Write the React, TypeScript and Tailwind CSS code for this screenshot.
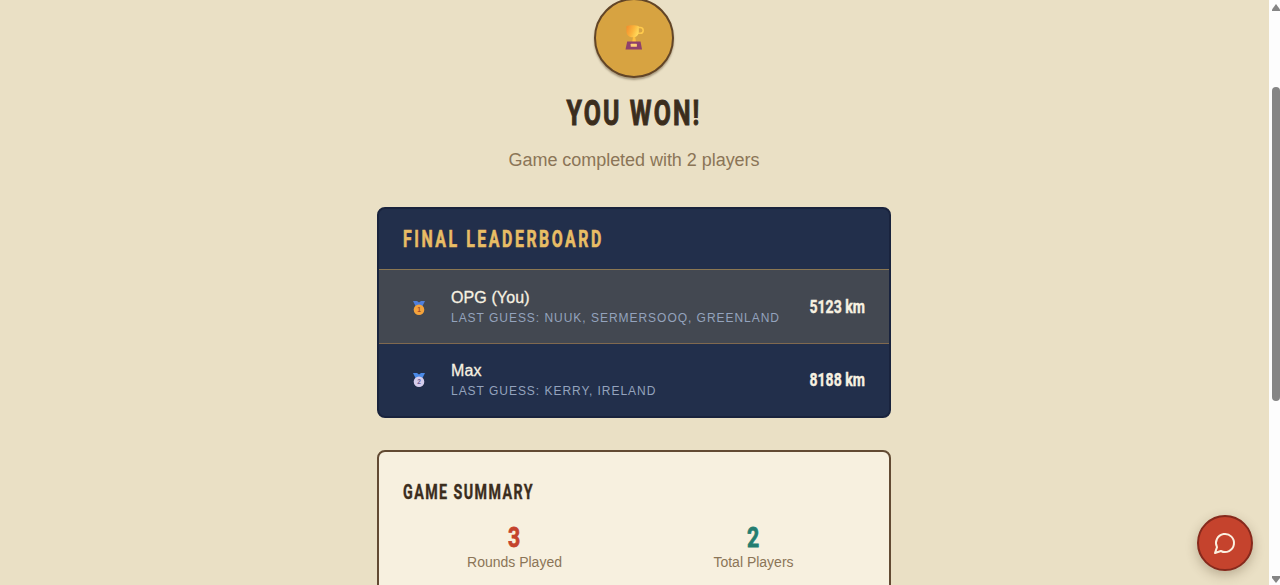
import React from "react";

interface Player {
  name: string;
  guess: string;
  distance: string;
  rank: number;
  ribbon: string;
  medal: string;
  digit: string;
}

const players: Player[] = [
  {
    name: "OPG (You)",
    guess: "Last guess: Nuuk, Sermersooq, Greenland",
    distance: "5123 km",
    rank: 1,
    ribbon: "#4f7fdc",
    medal: "#f5a33b",
    digit: "#a3492c",
  },
  {
    name: "Max",
    guess: "Last guess: Kerry, Ireland",
    distance: "8188 km",
    rank: 2,
    ribbon: "#4a8ae8",
    medal: "#d5cdec",
    digit: "#6a5a94",
  },
];

const Trophy = () => (
  <svg width="20" height="28" viewBox="0 0 20 28">
    <defs>
      <linearGradient id="cup" x1="0" y1="0" x2="1" y2="0.4">
        <stop offset="0" stopColor="#f28b2c" />
        <stop offset="0.6" stopColor="#fbb53c" />
        <stop offset="1" stopColor="#ffd75a" />
      </linearGradient>
    </defs>
    <path d="M14 3.5h2.3a2.6 2.6 0 0 1 0 5.8H13" fill="none" stroke="#ffca4c" strokeWidth="1.5" />
    <path d="M2.5 2.2C5 1 12 1 14.8 2.2v5.3c0 3.6-2.5 5.8-6 5.8s-6.3-2.2-6.3-5.8z" fill="url(#cup)" />
    <path d="M9 13h2.2l.8 5H8.2z" fill="#ffc03f" />
    <path d="M3.2 17.5h13.3l1.5 8H1.5z" fill="#8f416c" />
    <rect x="6.7" y="19.8" width="6.2" height="2.9" rx=".5" fill="#ffd079" />
  </svg>
);

const Medal = ({ player }: { player: Player }) => (
  <svg width="14" height="16" viewBox="0 0 14 16">
    <path d="M1 1h4l2 1.5L9 1h4l-2.5 5h-7z" fill={player.ribbon} />
    <circle cx="7" cy="9.7" r="5.3" fill={player.medal} />
    <text
      x="7"
      y="12.1"
      textAnchor="middle"
      fontSize="6.5"
      fontWeight="700"
      fontFamily="Liberation Sans, sans-serif"
      fill={player.digit}
    >
      {player.rank}
    </text>
  </svg>
);

const Row = ({ player }: { player: Player }) => (
  <li
    className={
      player.rank === 1
        ? "flex h-[74px] items-center border-b border-[#80694f] bg-[#434851] px-6 pt-0.5"
        : "flex h-[73px] items-center border-b border-dotted border-[#35415c] px-6"
    }
  >
    <div className="flex w-8 justify-center">
      <Medal player={player} />
    </div>
    <div className="ml-4 min-w-0 flex-1">
      <p className="pt-px text-[16px] leading-5 tracking-[0.1px] text-[#f7f1e1] [-webkit-text-stroke:0.3px_#f7f1e1]">
        {player.name}
      </p>
      <p className="text-[12px] leading-5 tracking-[0.97px] whitespace-nowrap text-[#94a3bd] uppercase">
        {player.guess}
      </p>
    </div>
    <div className="flex w-14 justify-end font-[Roboto,sans-serif] text-[19px] font-bold text-[#f7f1e1] [-webkit-text-stroke:0.4px_#f7f1e1]">
      <span className="origin-right scale-x-[0.74] whitespace-nowrap">{player.distance}</span>
    </div>
  </li>
);

const Stat = ({ value, label, color }: { value: string; label: string; color: string }) => (
  <div className="flex flex-col items-center">
    <span
      className={`scale-x-[0.76] font-[Roboto,sans-serif] text-[28px] leading-8 font-bold [-webkit-text-stroke:0.8px_currentColor] ${color}`}
    >
      {value}
    </span>
    <span className="-mt-0.5 text-[14px] leading-5 text-[#8b7557]">{label}</span>
  </div>
);

const Scrollbar = () => (
  <div className="flex w-[11px] flex-col items-end bg-[#fdfdfd]">
    <div className="flex h-[87px] w-2 pt-1">
      <svg width="8" height="8" viewBox="0 0 8 8">
        <path d="M4 0 8 5.5V7H0V5.5z" fill="#858585" />
      </svg>
    </div>
    <div className="h-[314px] w-2 rounded-t-[4px] rounded-b-[4px] bg-[#858585]" />
    <div className="mt-auto h-[9px] w-2">
      <svg width="8" height="7" viewBox="0 0 8 7">
        <path d="M0 0h8v2L4 7 0 2z" fill="#858585" />
      </svg>
    </div>
  </div>
);

const App = () => {
  return (
    <div className="flex h-[585px] overflow-hidden bg-[#eae0c5] font-['Liberation_Sans',sans-serif]">
      <main className="relative flex flex-1 flex-col items-center overflow-hidden pr-px">
        <div className="-mt-0.5 flex size-20 shrink-0 items-center justify-center rounded-full border-2 border-[#624527] bg-[#d7a341] shadow-[0_2px_2px_rgba(70,50,25,0.4)]">
          <Trophy />
        </div>
        <h1 className="mt-4 flex h-10 w-[134px] shrink-0 items-center justify-center font-[Roboto,sans-serif] text-[35px] font-bold tracking-[3px] text-[#3b2d1d] [-webkit-text-stroke:1px_#3b2d1d]">
          <span className="scale-x-[0.71] whitespace-nowrap">YOU WON!</span>
        </h1>
        <p className="mt-3 shrink-0 text-[18px] leading-7 tracking-[-0.04px] text-[#8b7557]">
          Game completed with 2 players
        </p>

        <section className="mt-[33px] h-[211px] w-[514px] shrink-0 overflow-hidden rounded-lg border-2 border-[#19233d] bg-[#222f4b]">
          <h2 className="flex h-[61px] items-center border-b border-[#8b7752] px-6 pt-0.5 font-[Roboto,sans-serif] text-[23px] font-bold tracking-[3.7px] text-[#e8bd65] [-webkit-text-stroke:0.6px_#e8bd65]">
            <span className="origin-left scale-x-[0.69] whitespace-nowrap">FINAL LEADERBOARD</span>
          </h2>
          <ul>
            {players.map((player) => (
              <Row key={player.name} player={player} />
            ))}
          </ul>
        </section>

        <section className="mt-8 h-[220px] w-[514px] shrink-0 rounded-lg border-2 border-[#624a33] bg-[#f7f0df] px-6 pt-[26px]">
          <h2 className="flex h-7 items-center font-[Roboto,sans-serif] text-[20px] font-bold tracking-[2px] text-[#3b2d1d] [-webkit-text-stroke:0.4px_#3b2d1d]">
            <span className="origin-left scale-x-[0.713] whitespace-nowrap">GAME SUMMARY</span>
          </h2>
          <div className="mt-4 grid grid-cols-2 gap-4">
            <Stat value="3" label="Rounds Played" color="text-[#c4432d]" />
            <Stat value="2" label="Total Players" color="text-[#237d70]" />
          </div>
        </section>

        <button
          aria-label="Chat"
          className="absolute right-4 bottom-3.5 flex size-14 items-center justify-center rounded-full border-2 border-[#86291c] bg-[#c5432d] shadow-[0_4px_12px_rgba(70,50,25,0.3)]"
        >
          <svg width="24" height="24" viewBox="0 0 24 24" fill="none" stroke="#fbf0e0" strokeWidth="2" strokeLinecap="round" strokeLinejoin="round">
            <path d="M7.9 20A9 9 0 1 0 4 16.1L2 22Z" />
          </svg>
        </button>
      </main>
      <Scrollbar />
    </div>
  );
};

export default App;
